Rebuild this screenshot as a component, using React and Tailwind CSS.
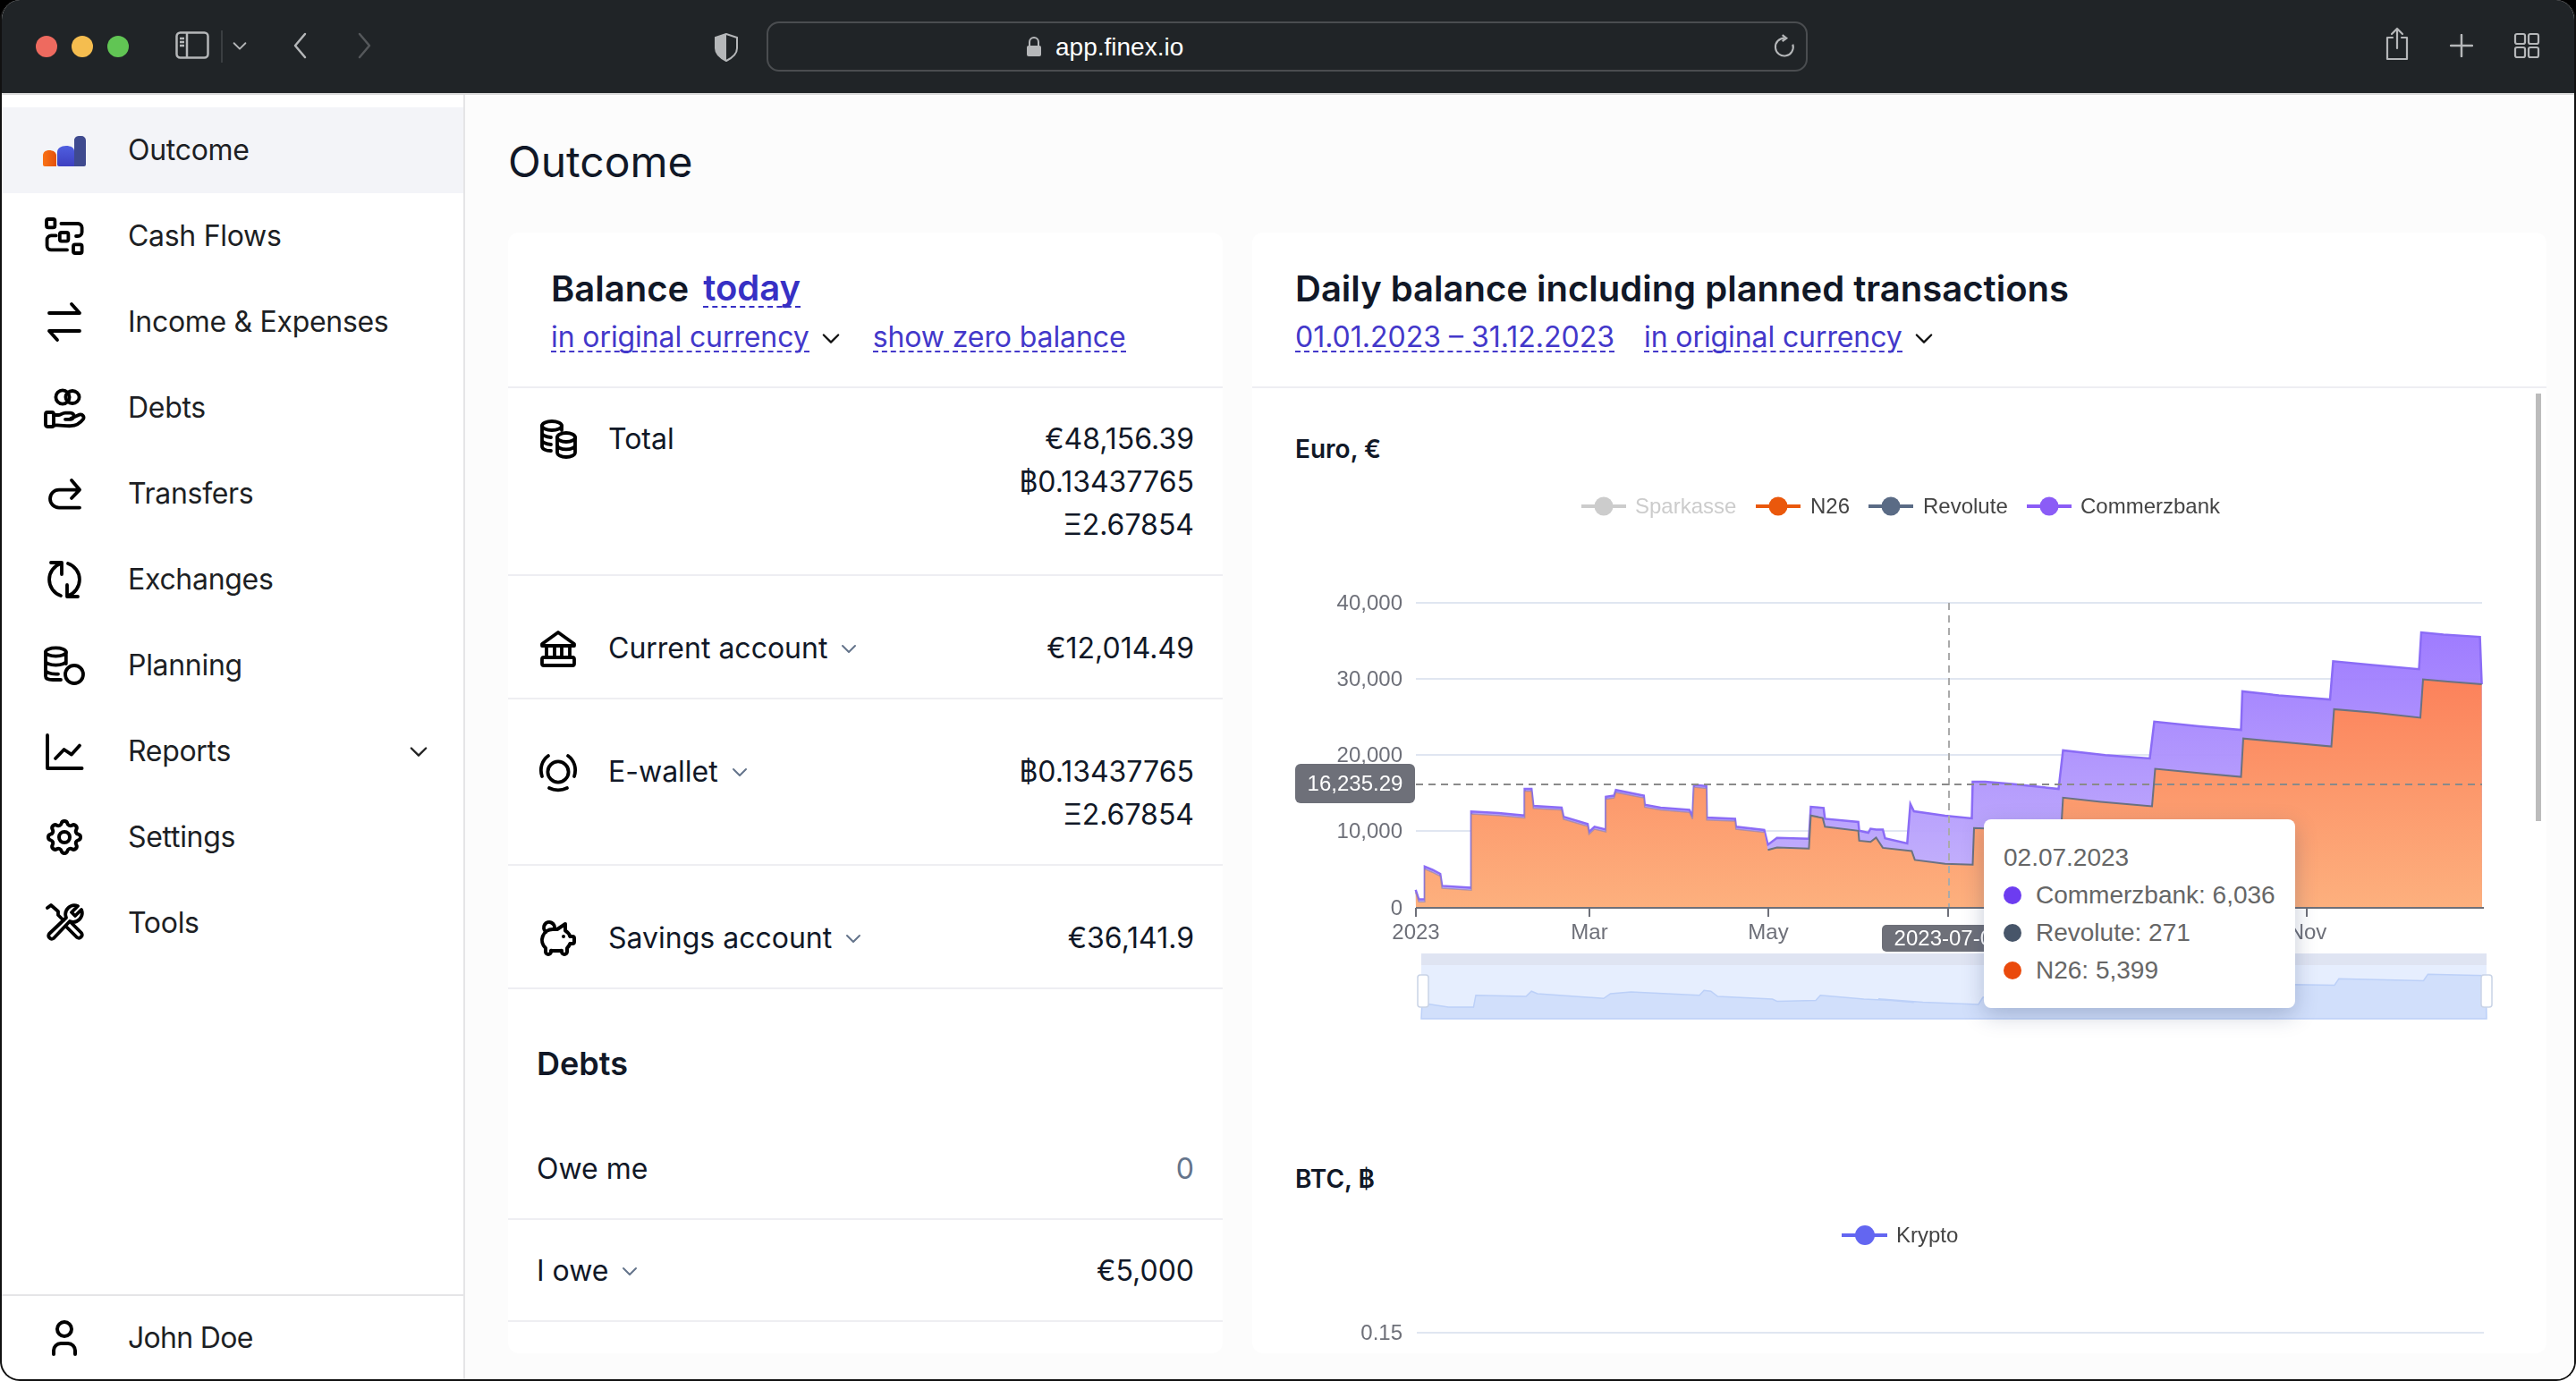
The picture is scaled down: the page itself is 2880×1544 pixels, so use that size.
import React from "react";
import { TbPigMoney, TbSettings, TbUser } from "react-icons/tb";

const S = ({ children, className = "" }) => (
  <svg viewBox="0 0 24 24" fill="none" stroke="currentColor" strokeWidth="1.900" strokeLinecap="round" strokeLinejoin="round" className={`w-12 h-12 shrink-0 ${className}`}>{children}</svg>
);

const Logo = () => (
  <svg viewBox="0 0 48 48" className="w-12 h-12 shrink-0">
    <defs>
      <linearGradient id="lg1" x1="0" y1="0" x2="0" y2="1"><stop offset="0" stopColor="#4f5fe0" /><stop offset="1" stopColor="#3d3fc0" /></linearGradient>
      <linearGradient id="lg2" x1="0" y1="0" x2="1" y2="0"><stop offset="0" stopColor="#f97316" /><stop offset="1" stopColor="#e4500c" /></linearGradient>
    </defs>
    <path d="M35 14a5 5 0 0 1 5-6h3a5 5 0 0 1 5 5v27a2 2 0 0 1-2 2H35z" fill="#3f4a8f" />
    <path d="M16 26c0-4 4-7 10-7 5 0 9 2 9 6v17H18a2 2 0 0 1-2-2z" fill="url(#lg1)" />
    <path d="M0 30c0-4 3-6 7-6s8 2 8 6v12H2a2 2 0 0 1-2-2z" fill="url(#lg2)" />
  </svg>
);

const CashFlows = () => (
  <S>
    <rect x="2" y="2.500" width="4.700" height="4.700" rx="1" />
    <rect x="9.400" y="10" width="4.800" height="4.800" rx="1" />
    <rect x="17" y="16.700" width="4.800" height="4.800" rx="1" />
    <path d="M10.200 5H19.500a2.300 2.300 0 0 1 2.300 2.300v2.400a2.300 2.300 0 0 1-2.300 2.300H18.500" />
    <path d="M7.300 11.700H4.600a2.300 2.300 0 0 0-2.300 2.300v3.400a2.300 2.300 0 0 0 2.300 2.300H13.500" />
  </S>
);
const IncomeExp = () => <S><path d="M3.500 7H20.500L16 2M20.500 17H3.500L8 22" /></S>;
const Debts = () => (
  <S>
    <circle cx="11" cy="6" r="3.800" />
    <ellipse cx="16.500" cy="6" rx="3.800" ry="3.500" />
    <rect x="1.500" y="14.500" width="4.500" height="8" rx="1" />
    <path d="M6 16h3c1.200 0 1.800-1.200 3.500-1.200h3a1.800 1.800 0 0 1 0 3.600h-3M15.500 18l5-2.200a1.700 1.700 0 0 1 2 2.500c-1.500 2-4 3.700-7 3.800-3 .2-6.500-.800-9.500-.300" />
  </S>
);
const Transfers = () => <S><path d="M16 4.500 20.500 9.800 16 14.500M20.500 9.800H9a5 5 0 0 0 0 10H20.500" /></S>;
const Exchanges = () => (
  <S>
    <path d="M10 3A9.500 9.500 0 0 0 10 21" />
    <path d="M4.500 2.500H10.500V9" />
    <path d="M14 3A9.500 9.500 0 0 1 14 21" />
    <path d="M13.500 15V21.500H19.500" />
  </S>
);
const Planning = () => (
  <S>
    <ellipse cx="7.200" cy="4.500" rx="5.700" ry="2.300" />
    <path d="M1.500 4.500V18c0 1.200 1.500 2 4 2h4.500M12.900 4.500V11M1.500 9.500c0 1.300 2.500 2.300 5.700 2.300s5.700-1 5.700-2.300M1.500 14.500c0 1.300 2.500 2.300 5.700 2.300h1.300" />
    <circle cx="17.500" cy="17" r="5" />
  </S>
);
const Reports = () => <S><path d="M2.500 3V21.500H21.800M7 16l4.800-5 4.200 2.800 4.500-5" /></S>;
const Tools = () => (
  <S>
    <path d="M3.500 18 13 9a5 5 0 0 1 6.500-6.500L16 6l2 2 3.500-3.500a5 5 0 0 1-6.500 6.500L6 20.500A1.800 1.800 0 0 1 3.500 18z" />
    <path d="M2.500 3.500 4.500 2l4 3.500v2l3 3M13.500 14.500l5.500 5.500a1.800 1.800 0 0 0 2.500-2.500l-5.500-5.500" />
  </S>
);
const TotalCoins = () => (
  <S>
    <ellipse cx="8.500" cy="4.500" rx="5.500" ry="2.500" />
    <path d="M3 4.500V16c0 1.500 2 2.500 5 2.500M3 8.500c0 1.300 2.200 2.300 5 2.500M3 12.500c0 1.300 2.200 2.300 5 2.500M14 4.500V7" />
    <ellipse cx="16.500" cy="11" rx="5" ry="2.500" />
    <path d="M11.500 11v8.500c0 1.400 2.200 2.500 5 2.500s5-1.100 5-2.500V11M11.500 15.200c0 1.400 2.200 2.500 5 2.500s5-1.100 5-2.500" />
  </S>
);
const Bank = () => (
  <S>
    <path d="M3 9.500 12 3l9 6.500v1H3z" />
    <path d="M5.500 10.500V17M10 10.500V17M14 10.500V17M18.500 10.500V17" />
    <rect x="3" y="17" width="18" height="4.500" rx="1" />
  </S>
);
const Wallet = () => (
  <S>
    <circle cx="12" cy="12" r="5.800" />
    <path d="M6.500 3C3 5.500 1.500 10 3 14.500M17.500 3C21 5.500 22.500 10 21 14.500M7 21c3 1.500 7 1.500 10 0" />
  </S>
);
const Chev = ({ className = "" }) => (
  <svg viewBox="0 0 24 24" fill="none" stroke="currentColor" strokeWidth="2" strokeLinecap="round" strokeLinejoin="round" className={`w-6 h-6 shrink-0 ${className}`}><path d="M5 9l7 7 7-7" /></svg>
);

const nav = [
  ["Outcome", <Logo />],
  ["Cash Flows", <CashFlows />],
  ["Income & Expenses", <IncomeExp />],
  ["Debts", <Debts />],
  ["Transfers", <Transfers />],
  ["Exchanges", <Exchanges />],
  ["Planning", <Planning />],
  ["Reports", <Reports />],
  ["Settings", <TbSettings className="w-12 h-12 shrink-0" />],
  ["Tools", <Tools />],
];

const z5 = ([x, y]) => [1400 + x / 1.96, 460 + y / 2.24];
const z6 = ([x, y]) => [2100 + x / 2.01, 640 + y / 2.8];

const purpleL = [[358,1198],[365,1222],[378,1222],[378,1140],[395,1148],[412,1158],[416,1188],[480,1193],[480,1002],[540,1006],[597,1012],[597,945],[612,945],[616,988],[678,992],[682,1015],[735,1033],[738,1053],[750,1040],[775,1047],[775,965],[793,962],[797,948],[858,962],[860,985],[895,992],[958,998],[965,1015],[968,935],[995,938],[996,1017],[1058,1020],[1060,1040],[1122,1048],[1130,1085],[1150,1068],[1220,1070],[1224,990],[1252,993],[1255,1020],[1328,1028],[1330,1050],[1350,1055],[1355,1045]];
const purpleR = [[-5,805],[10,805],[15,832],[65,848],[72,725],[80,748],[150,762],[210,770],[212,655],[240,655],[300,662],[405,678],[415,557],[510,572],[610,582],[620,467],[720,482],[815,493],[818,372],[900,385],[1015,398],[1022,278],[1110,290],[1215,303],[1220,188],[1270,195],[1352,202],[1356,350]];
const orangeA = purpleL.slice(0, 34).map(([x, y]) => [x, y + 6]);
const orangeB = [[1130,1098],[1150,1092],[1220,1095],[1224,1012],[1250,1018],[1255,1040],[1328,1050],[1330,1075],[1355,1078]];
const orangeR = [[-5,830],[10,862],[75,872],[82,900],[150,912],[212,915],[215,800],[300,805],[410,822],[415,705],[500,718],[615,732],[622,615],[720,628],[815,640],[820,520],[900,530],[1018,545],[1024,428],[1120,440],[1218,455],[1224,335],[1280,342],[1356,350]];

const toD = (pts) => pts.map((p, i) => `${i ? "L" : "M"}${p[0].toFixed(1)} ${p[1].toFixed(1)}`).join("");
const purple = [...purpleL.map(z5), ...purpleR.map(z6)];
const orangeLeft = orangeA.map(z5);
const orangeRight = [...orangeB.map(z5), ...orangeR.map(z6)];
const orange = [...orangeLeft, ...orangeRight];
const miniPts = [...[[372,1482],[430,1492],[485,1492],[490,1462],[600,1465],[612,1452],[625,1458],[770,1470],[785,1458],[830,1454],[980,1462],[990,1450],[1005,1452],[1020,1465],[1140,1472],[1150,1477],[1235,1475],[1245,1462],[1340,1472],[1400,1475],[1450,1480]].map(z5), ...[[0,1335],[100,1345],[225,1352],[235,1330],[935,1290],[1025,1292],[1035,1272],[1225,1278],[1235,1258],[1365,1262]].map(z6)];

const Leg = ({ x, c, t, tc = "#444", tx }) => (
  <g>
    <line x1={x} x2={x + 50} y1="566" y2="566" stroke={c} strokeWidth="4" />
    <circle cx={x + 25} cy="566" r="10.500" fill={c} />
    <text x={tx} y="574" fontSize="24" fill={tc}>{t}</text>
  </g>
);

const Label = ({ x, y, t, a = "end" }) => <text x={x} y={y} fontSize="24" fill="#6e7079" textAnchor={a}>{t}</text>;

const EuroChart = () => (
  <svg viewBox="1400 522 1446 758" className="w-[1446px] h-[758px] shrink-0 font-['Liberation_Sans'] blur-[0.4px]">
    <defs>
      <linearGradient id="po" gradientUnits="userSpaceOnUse" x1="0" y1="700" x2="0" y2="1015"><stop offset="0" stopColor="#9a75ff" /><stop offset="1" stopColor="#c5b4fb" /></linearGradient>
      <linearGradient id="or" gradientUnits="userSpaceOnUse" x1="0" y1="760" x2="0" y2="1015"><stop offset="0" stopColor="#ff8256" /><stop offset="1" stopColor="#ffb07a" /></linearGradient>
    </defs>
    <Leg x={1768} c="#cccccc" t="Sparkasse" tc="#cccccc" tx={1828} />
    <Leg x={1963} c="#ea580c" t="N26" tx={2024} />
    <Leg x={2089} c="#5a6b85" t="Revolute" tx={2150} />
    <Leg x={2266} c="#8b5cf6" t="Commerzbank" tx={2326} />

    {[674, 759, 844, 929].map((y) => <line key={y} x1="1583" x2="2775" y1={y} y2={y} stroke="#e0e6f1" strokeWidth="2" />)}
    <Label x={1568} y={682} t="40,000" />
    <Label x={1568} y={767} t="30,000" />
    <Label x={1568} y={852} t="20,000" />
    <Label x={1568} y={937} t="10,000" />
    <Label x={1568} y={1023} t="0" />

    <path d={`${toD(purple)}L2775 1015L1583 1015Z`} fill="url(#po)" stroke="none" fillOpacity="0.96" />
    <path d={toD(purple)} fill="none" stroke="#8b6cf6" strokeWidth="2.500" />
    <path d={`${toD(orange)}L2775 1015L1583 1015Z`} fill="url(#or)" fillOpacity="0.97" />
    <path d={toD(orangeLeft)} fill="none" stroke="#8a7fb0" strokeWidth="1.500" strokeOpacity="0.6" />
    <path d={toD(orangeRight)} fill="none" stroke="#6b7280" strokeWidth="2" />

    <line x1="2179" x2="2179" y1="674" y2="1015" stroke="#aaaaaa" strokeWidth="2" strokeDasharray="8 6" />
    <line x1="1583" x2="2775" y1="877" y2="877" stroke="#8a8a8a" strokeWidth="2" strokeDasharray="8 6" />

    <line x1="1583" x2="2777" y1="1015" y2="1015" stroke="#6e7079" strokeWidth="2" />
    {[1583, 1777, 1977, 2178, 2579].map((x) => <line key={x} x1={x} x2={x} y1="1015" y2="1025" stroke="#6e7079" strokeWidth="2" />)}
    <Label x={1583} y={1050} t="2023" a="middle" />
    <Label x={1777} y={1050} t="Mar" a="middle" />
    <Label x={1977} y={1050} t="May" a="middle" />
    <Label x={2580} y={1050} t="Nov" a="middle" />

    <rect x="1448" y="854" width="134" height="44" rx="6" fill="#6e7079" />
    <text x="1515" y="884" fontSize="24" fill="#ffffff" textAnchor="middle">16,235.29</text>
    <rect x="2104" y="1034" width="150" height="30" rx="5" fill="#6e7079" />
    <text x="2179" y="1057" fontSize="24" fill="#ffffff" textAnchor="middle">2023-07-02</text>

    <rect x="1589" y="1066" width="1191" height="13" fill="#dfe4f2" />
    <rect x="1589" y="1079" width="1191" height="60" fill="#e6eefe" />
    <path d={`${toD(miniPts)}L2780 1139L1589 1139Z`} fill="#d1dffb" stroke="#bcd0f8" strokeWidth="1.500" />
    <rect x="1585" y="1090" width="12" height="36" rx="3" fill="#ffffff" stroke="#c9d3e6" strokeWidth="1.500" />
    <rect x="2774" y="1090" width="12" height="36" rx="3" fill="#ffffff" stroke="#c9d3e6" strokeWidth="1.500" />
  </svg>
);

const BtcChart = () => (
  <svg viewBox="1400 1340 1446 172" className="w-[1446px] h-[172px] shrink-0 font-['Liberation_Sans'] blur-[0.4px]">
    <line x1="2059" x2="2110" y1="1381" y2="1381" stroke="#6366f1" strokeWidth="4" />
    <circle cx="2085" cy="1381" r="11" fill="#6366f1" />
    <text x="2120" y="1389" fontSize="24" fill="#444">Krypto</text>
    <line x1="1584" x2="2777" y1="1490" y2="1490" stroke="#e0e6f1" strokeWidth="2" />
    <text x="1568" y="1498" fontSize="24" fill="#6e7079" textAnchor="end">0.15</text>
  </svg>
);

const Link = ({ children, className = "" }) => (
  <span className={`border-b-2 border-dashed border-[#4338ca] text-[#4338ca] text-[32px] leading-[30px] whitespace-nowrap ${className}`}>{children}</span>
);

const Row = ({ icon, label, chev, values, extra = false, zero = false }) => (
  <div className={`flex items-start justify-between pl-8 pr-8 pb-[31px] border-b-2 border-[#eeeef2] ${extra ? "pt-[57px]" : "pt-[33px]"}`}>
    <div className="flex items-center h-12">
      {icon && <span className="w-12 h-12 mr-8 shrink-0 flex items-center justify-center text-black">{icon}</span>}
      <span>{label}</span>
      {chev && <Chev className="ml-3 text-[#64748b]" />}
    </div>
    <div className={`flex flex-col items-end ${zero ? "text-[#64748b]" : ""}`}>
      {values.map((v) => <span key={v} className="h-12 leading-[48px]">{v}</span>)}
    </div>
  </div>
);

export default function App() {
  return (
    <div className="w-[2880px] h-[1544px] bg-[linear-gradient(#000_50%,#fff_50%)] font-[Inter,sans-serif]">
      <div className="w-full h-full rounded-[22px] overflow-hidden border-x-2 border-b-2 border-[#111] flex flex-col bg-white">
        {/* browser bar */}
        <div className="h-[106px] shrink-0 bg-[#202427] flex items-start border-b-2 border-[#d8d8d8] pl-[38px] pr-[38px] text-[#b5b7b9]">
          <div className="flex gap-4 mt-10">
            <span className="w-6 h-6 rounded-full bg-[#ee6a5f]" />
            <span className="w-6 h-6 rounded-full bg-[#f5bd4f]" />
            <span className="w-6 h-6 rounded-full bg-[#61c554]" />
          </div>
          <svg viewBox="0 0 38 32" fill="none" stroke="currentColor" strokeWidth="2.500" className="w-[38px] h-8 ml-[52px] mt-[35px] shrink-0">
            <rect x="1.500" y="1.500" width="35" height="28" rx="4" />
            <path d="M13 1.500v28M5 8h5M5 12h5M5 16h5" />
          </svg>
          <span className="w-0.5 h-9 bg-[#3a3e41] ml-[13px] mt-[34px]" />
          <Chev className="ml-[8px] mt-[40px] !w-[22px] !h-[22px]" />
          <svg viewBox="0 0 16 30" fill="none" stroke="currentColor" strokeWidth="2.500" strokeLinecap="round" strokeLinejoin="round" className="w-4 h-[30px] ml-[48px] mt-[36px] shrink-0"><path d="M14 2 3 15l11 13" /></svg>
          <svg viewBox="0 0 16 30" fill="none" stroke="#55585b" strokeWidth="2.500" strokeLinecap="round" strokeLinejoin="round" className="w-4 h-[30px] ml-[57px] mt-[36px] shrink-0"><path d="M2 2l11 13L2 28" /></svg>
          <svg viewBox="0 0 28 32" className="w-7 h-8 ml-[382px] mt-[37px] shrink-0">
            <path d="M14 1 2 5v12c0 6 6 11 12 14 6-3 12-8 12-14V5z" fill="none" stroke="currentColor" strokeWidth="2" />
            <path d="M14 1 2 5v12c0 6 6 11 12 14z" fill="currentColor" />
          </svg>
          <div className="w-[1164px] h-14 ml-[31px] mt-6 rounded-[14px] border-2 border-[#4a4d50] flex items-center pl-[288px] pt-0.5 relative shrink-0">
            <svg viewBox="0 0 18 24" className="w-[18px] h-6 mr-[15px]"><path d="M4 10V6a5 5 0 0 1 10 0v4" fill="none" stroke="currentColor" strokeWidth="2" /><rect x="1" y="10" width="16" height="12" rx="2" fill="currentColor" /></svg>
            <span className="text-[28px] text-white font-['Liberation_Sans']">app.finex.io</span>
            <svg viewBox="0 0 24 24" fill="none" stroke="currentColor" strokeWidth="1.800" className="absolute right-[10px] top-[12px] w-7 h-7"><path d="M12 4a8.500 8.500 0 1 0 8 6" /><path d="M10 1l4 3-4 3" /></svg>
          </div>
          <svg viewBox="0 0 28 38" fill="none" stroke="currentColor" strokeWidth="2.200" strokeLinecap="round" strokeLinejoin="round" className="w-7 h-[38px] ml-auto mt-[30px] shrink-0"><path d="M9 12H3v24h22V12h-6M14 24V2M8 8l6-6 6 6" /></svg>
          <svg viewBox="0 0 26 26" fill="none" stroke="currentColor" strokeWidth="2.500" strokeLinecap="round" className="w-[26px] h-[26px] ml-[45px] mt-[38px] shrink-0"><path d="M13 1v24M1 13h24" /></svg>
          <svg viewBox="0 0 30 30" fill="none" stroke="currentColor" strokeWidth="2.200" className="w-[30px] h-[30px] ml-[45px] mt-[36px] shrink-0"><rect x="2" y="2" width="11" height="11" rx="2" /><rect x="17" y="2" width="11" height="11" rx="2" /><rect x="2" y="17" width="11" height="11" rx="2" /><rect x="17" y="17" width="11" height="11" rx="2" /></svg>
        </div>

        <div className="flex flex-1 min-h-0">
          {/* sidebar */}
          <aside className="w-[518px] shrink-0 border-r-2 border-[#e5e5e7] flex flex-col pt-[14px] text-[32px] text-[#1d1f24] tracking-[-0.3px]">
            <nav className="flex flex-col flex-1">
              {nav.map(([t, ic], i) => (
                <div key={t} className={`h-24 flex items-center pl-[46px] pr-9 ${i === 0 ? "bg-[#f3f4f8]" : ""}`}>
                  <span className="text-black flex">{ic}</span>
                  <span className="ml-[47px] flex-1">{t}</span>
                  {t === "Reports" && <Chev className="!w-7 !h-7 text-[#222]" />}
                </div>
              ))}
            </nav>
            <div className="h-[95px] border-t-2 border-[#e5e5e7] flex items-center pl-[46px]">
              <TbUser className="w-12 h-12 text-black" />
              <span className="ml-[47px] tracking-[-0.7px]">John Doe</span>
            </div>
          </aside>

          {/* main */}
          <main className="flex-1 min-w-0 bg-[#fcfcfc] pl-[48px] pr-[31px] pb-[29px] flex flex-col text-[#111827] text-[32px]">
            <h1 className="h-[154px] shrink-0 pt-[46px] text-[48px] leading-[58px] font-normal">Outcome</h1>
            <div className="flex flex-1 min-h-0 gap-[33px]">
              <section className="w-[799px] shrink-0 bg-white rounded-xl overflow-hidden">
                <div className="h-[174px] border-b-2 border-[#eeeef2] pl-12 pt-[42px]">
                  <div className="flex gap-4 items-start text-[40px] leading-[42px] font-semibold">
                    <span>Balance</span>
                    <span className="text-[#3730c4] border-b-2 border-dashed border-[#3730c4] leading-[40px]">today</span>
                  </div>
                  <div className="flex items-center mt-[18px]">
                    <Link className="tracking-[-0.1px]">in original currency</Link>
                    <Chev className="!w-7 !h-7 ml-[10px] text-[#111]" />
                    <Link className="ml-[33px] tracking-[-0.1px]">show zero balance</Link>
                  </div>
                </div>
                <Row icon={<TotalCoins />} label="Total" values={["€48,156.39", "฿0.13437765", "Ξ2.67854"]} />
                <Row extra icon={<Bank />} label="Current account" chev values={["€12,014.49"]} />
                <Row extra icon={<Wallet />} label="E-wallet" chev values={["฿0.13437765", "Ξ2.67854"]} />
                <Row extra icon={<TbPigMoney className="w-12 h-12" />} label="Savings account" chev values={["€36,141.9"]} />
                <h2 className="pl-8 pt-[59px] pb-[37px] text-[36px] leading-[48px] font-semibold">Debts</h2>
                <Row label="Owe me" values={["0"]} zero />
                <Row label="I owe" chev values={["€5,000"]} />
              </section>

              <section className="flex-1 min-w-0 bg-white rounded-xl overflow-hidden flex flex-col">
                <div className="h-[174px] shrink-0 border-b-2 border-[#eeeef2] pl-12 pt-[42px]">
                  <div className="text-[40px] leading-[42px] font-semibold">Daily balance including planned transactions</div>
                  <div className="flex items-center mt-[18px]">
                    <Link>01.01.2023 – 31.12.2023</Link>
                    <Link className="ml-[33px] tracking-[-0.1px]">in original currency</Link>
                    <Chev className="!w-7 !h-7 ml-[10px] text-[#111]" />
                  </div>
                </div>
                <div className="relative flex-1 min-h-0 overflow-hidden flex flex-col">
                  <h3 className="pl-12 pt-[48px] h-[88px] shrink-0 text-[28px] leading-[40px] font-semibold">Euro, €</h3>
                  <EuroChart />
                  <h3 className="pl-12 mt-[18px] h-[42px] shrink-0 text-[28px] leading-[40px] font-semibold">BTC, ฿</h3>
                  <BtcChart />
                  <div className="absolute right-[6px] top-[6px] w-1.5 h-[478px] bg-[#bcbcbc]" />
                  <div className="absolute left-[818px] top-[482px] w-[348px] h-[211px] bg-white rounded-lg shadow-[0_8px_24px_rgba(30,50,100,0.25)] pl-[22px] pt-[22px] font-['Liberation_Sans'] text-[28px] leading-[42px] text-[#666666]">
                    <div>02.07.2023</div>
                    {[["#6d3cf0", "Commerzbank: 6,036"], ["#475569", "Revolute: 271"], ["#ea4a0c", "N26: 5,399"]].map(([c, t]) => (
                      <div key={t} className="flex items-center">
                        <span className="w-5 h-5 rounded-full mr-4 shrink-0" style={{ backgroundColor: c }} />
                        {t}
                      </div>
                    ))}
                  </div>
                </div>
              </section>
            </div>
          </main>
        </div>
      </div>
    </div>
  );
}
